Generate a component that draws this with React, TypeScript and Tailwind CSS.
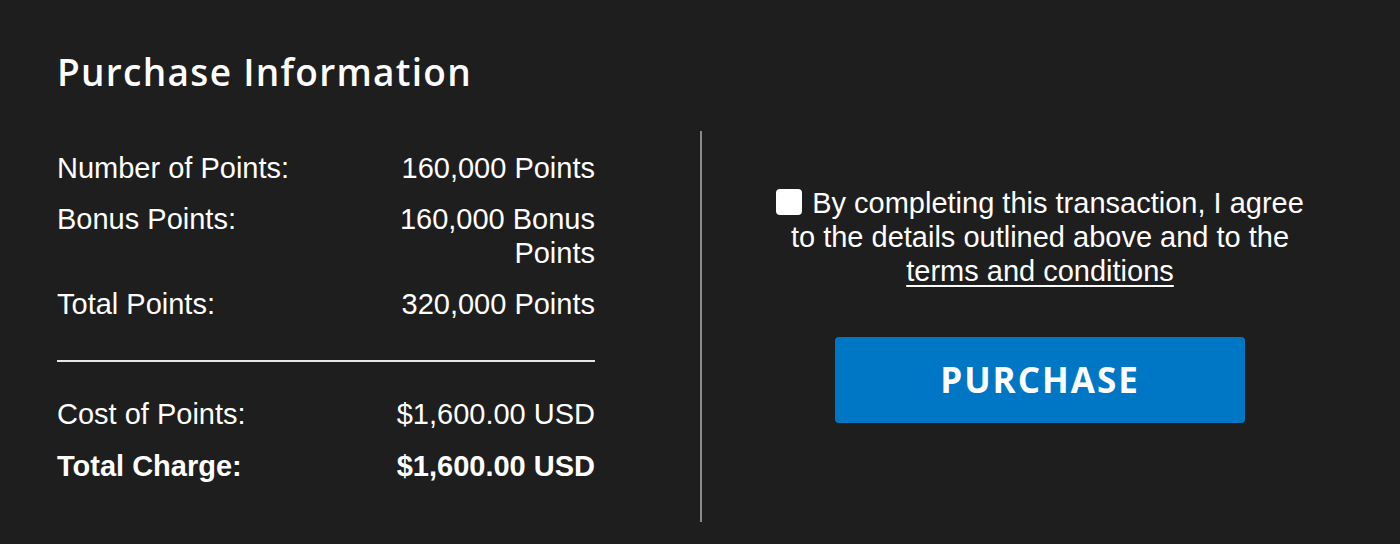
import React from "react";

export default function App() {
  const rows: [string, string][] = [
    ["Number of Points:", "160,000 Points"],
    ["Bonus Points:", "160,000 Bonus Points"],
    ["Total Points:", "320,000 Points"],
  ];
  return (
    <div className="min-h-[544px] w-[1400px] bg-[#1e1e1e] text-white pl-[57px] pt-[50px]" style={{ fontFamily: '"Liberation Sans", Arial, sans-serif' }}>
      <h1 className="h-[44px] text-[37px] leading-[44px] font-semibold tracking-[1.3px]" style={{ fontFamily: '"Open Sans", sans-serif' }}>
        Purchase Information
      </h1>
      <div className="mt-[37px] flex">
        <div className="w-[538px] pt-[20px] text-[29px] leading-[34px]">
          <div className="flex flex-col gap-[17px]">
            {rows.map(([l, v]) => (
              <div key={l} className="grid grid-cols-2">
                <div>{l}</div>
                <div className="text-right">{v}</div>
              </div>
            ))}
          </div>
          <div className="mt-[39px] h-[2px] bg-[#e6e6e6]" />
          <div className="mt-[35px] flex flex-col gap-[18px]">
            <div className="grid grid-cols-2">
              <div>Cost of Points:</div>
              <div className="text-right">$1,600.00 USD</div>
            </div>
            <div className="grid grid-cols-2 font-bold">
              <div>Total Charge:</div>
              <div className="text-right">$1,600.00 USD</div>
            </div>
          </div>
        </div>
        <div className="ml-[105px] h-[391px] w-[2px] bg-[#8a8a8a]" />
        <div className="w-[676px] pt-[55px] flex flex-col items-center">
          <p className="w-[540px] text-center text-[29px] leading-[34px]">
            <span className="mr-[10px] inline-block h-[26px] w-[26px] rounded-[4px] bg-white align-[-2px]" />
            By completing this transaction, I agree to the details outlined above and to the{" "}
            <span className="underline underline-offset-[4px]">terms and conditions</span>
          </p>
          <button className="mt-[49px] h-[86px] w-[410px] rounded-[4px] bg-[#0077c4] text-[35px] font-bold tracking-[2px] text-white" style={{ fontFamily: '"Open Sans", sans-serif' }}>
            PURCHASE
          </button>
        </div>
      </div>
    </div>
  );
}
